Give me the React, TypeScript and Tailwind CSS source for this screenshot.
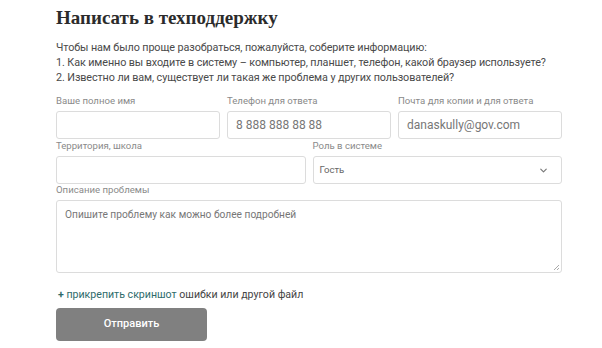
import { ChevronDown } from "lucide-react";

const sans = { fontFamily: "Roboto, 'Liberation Sans', sans-serif" };

function Label({ children }: { children: string }) {
  return <div className="text-[9.6px] leading-[12px] text-[#8a8a8a] mb-[4px]">{children}</div>;
}

function Field({ label, value }: { label: string; value?: string }) {
  return (
    <div>
      <Label>{label}</Label>
      <div className="h-[28px] border border-[#dcdcdc] rounded-[3px] bg-white px-[8px] flex items-center text-[12px] text-[#777]">
        {value}
      </div>
    </div>
  );
}

export default function App() {
  return (
    <div className="w-[602px] h-[348px] bg-white overflow-hidden" style={sans}>
      <div className="pl-[56px] pr-[20px] pt-[6px]">
        <h1
          className="text-[19px] leading-[24px] font-bold text-[#2b2b2b]"
          style={{ fontFamily: "'Liberation Serif', serif" }}
        >
          Написать в техподдержку
        </h1>

        <div className="mt-[10px] text-[10.8px] leading-[15px] tracking-[-0.1px] text-[#4a4a4a]">
          <p>Чтобы нам было проще разобраться, пожалуйста, соберите информацию:</p>
          <p>1. Как именно вы входите в систему – компьютер, планшет, телефон, какой браузер используете?</p>
          <p>2. Известно ли вам, существует ли такая же проблема у других пользователей?</p>
        </div>

        <div className="w-[506px] mt-[10px]">
          <div className="grid grid-cols-3 gap-x-[7px]">
            <Field label="Ваше полное имя" />
            <Field label="Телефон для ответа" value="8 888 888 88 88" />
            <Field label="Почта для копии и для ответа" value="danaskully@gov.com" />
          </div>

          <div className="grid grid-cols-2 gap-x-[7px] mt-[1px]">
            <Field label="Территория, школа" />
            <div>
              <Label>Роль в системе</Label>
              <div className="h-[28px] border border-[#dcdcdc] rounded-[3px] bg-white pl-[6px] pr-[12px] flex items-center justify-between text-[9.6px] text-[#666]">
                <span>Гость</span>
                <ChevronDown className="w-[11px] h-[11px] text-[#777]" strokeWidth={2.5} />
              </div>
            </div>
          </div>

          <div>
            <Label>Описание проблемы</Label>
            <div className="relative h-[73px] border border-[#dcdcdc] rounded-[3px] bg-white px-[8px] pt-[6px] text-[10.2px] text-[#777]">
              Опишите проблему как можно более подробней
              <svg className="absolute right-[1px] bottom-[1px]" width="7" height="7" viewBox="0 0 7 7">
                <path d="M6 1 L1 6 M6 4 L4 6" stroke="#aaa" strokeWidth="1" />
              </svg>
            </div>
          </div>

          <div className="mt-[15px] pl-[2px] text-[10.6px] leading-[14px] font-normal text-[#444]">
            <span className="text-[#2e6b6b]">
              <span className="font-bold">+</span> прикрепить скриншот
            </span>{" "}
            ошибки или другой файл
          </div>

          <button className="mt-[6px] w-[151px] h-[33px] rounded-[4px] bg-[#808080] text-white text-[11px] font-medium flex items-center justify-center">
            Отправить
          </button>
        </div>
      </div>
    </div>
  );
}
